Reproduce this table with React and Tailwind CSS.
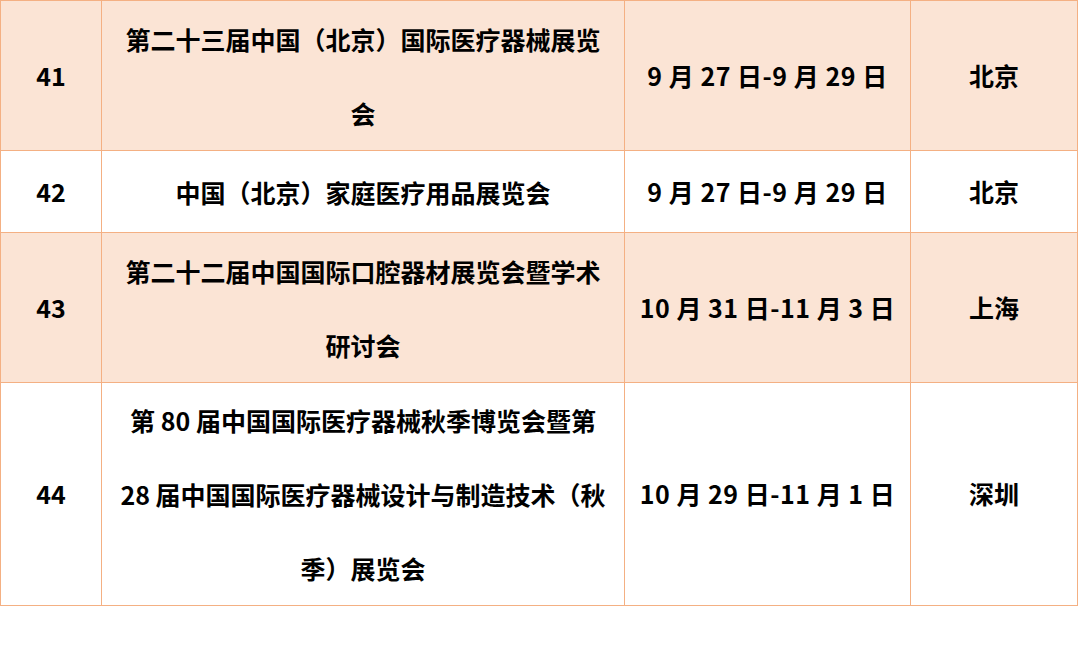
import React from 'react';

const rows = [
  { no: '41', name: ['第二十三届中国（北京）国际医疗器械展览', '会'], date: '9 月 27 日-9 月 29 日', city: '北京', shade: true, h: 'h-[150px]' },
  { no: '42', name: ['中国（北京）家庭医疗用品展览会'], date: '9 月 27 日-9 月 29 日', city: '北京', shade: false, h: 'h-[82px]' },
  { no: '43', name: ['第二十二届中国国际口腔器材展览会暨学术', '研讨会'], date: '10 月 31 日-11 月 3 日', city: '上海', shade: true, h: 'h-[150px]' },
  { no: '44', name: ['第 80 届中国国际医疗器械秋季博览会暨第', '28 届中国国际医疗器械设计与制造技术（秋', '季）展览会'], date: '10 月 29 日-11 月 1 日', city: '深圳', shade: false, h: 'h-[223px]' },
];

export default function App() {
  return (
    <div className="w-[1080px] h-[646px] bg-white" style={{ fontFamily: '"Noto Sans CJK SC", "Noto Sans", sans-serif' }}>
      <table className="border-collapse w-[1077px] table-fixed text-[25px] font-bold text-black">
        <colgroup>
          <col className="w-[101px]" />
          <col className="w-[523px]" />
          <col className="w-[286px]" />
          <col className="w-[167px]" />
        </colgroup>
        <tbody>
          {rows.map(r => (
            <tr key={r.no} className={`${r.h} ${r.shade ? 'bg-[#fbe4d5]' : 'bg-white'}`}>
              <td className="border border-[#f4b083] text-center p-0">{r.no}</td>
              <td className="border border-[#f4b083] text-center p-0 leading-[74px] whitespace-nowrap">
                {r.name.map((line, i) => (
                  <div key={i}>{line}</div>
                ))}
              </td>
              <td className="border border-[#f4b083] text-center p-0 whitespace-nowrap tracking-[0.5px]">{r.date}</td>
              <td className="border border-[#f4b083] text-center p-0">{r.city}</td>
            </tr>
          ))}
        </tbody>
      </table>
    </div>
  );
}
